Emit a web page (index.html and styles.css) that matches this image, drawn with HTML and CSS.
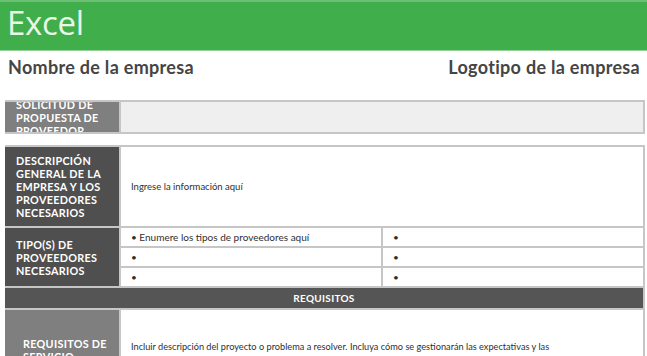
FILE: index.html
```html
<!DOCTYPE html>
<html lang="es">
<head>
<meta charset="utf-8">
<title>Solicitud de propuesta de proveedor</title>
<link rel="stylesheet" href="styles.css">
</head>
<body>
<header class="banner"><span class="app-name">Excel</span></header>
<div class="company-row">
  <h1 class="company-name">Nombre de la empresa</h1>
  <div class="company-logo">Logotipo de la empresa</div>
</div>

<section class="sheet sheet-title">
  <div class="label label-mid"><span>SOLICITUD DE PROPUESTA DE PROVEEDOR</span></div>
  <div class="value value-grey"></div>
</section>

<section class="sheet sheet-main">
  <div class="label label-dark"><span>DESCRIPCIÓN GENERAL DE LA EMPRESA Y LOS PROVEEDORES NECESARIOS</span></div>
  <div class="value value-text">Ingrese la información aquí</div>

  <div class="label label-dark label-types"><span>TIPO(S) DE PROVEEDORES NECESARIOS</span></div>
  <div class="types">
    <div class="type-cell">• Enumere los tipos de proveedores aquí</div>
    <div class="type-cell">•</div>
    <div class="type-cell">•</div>
    <div class="type-cell">•</div>
    <div class="type-cell">•</div>
    <div class="type-cell">•</div>
  </div>

  <div class="section-bar">REQUISITOS</div>

  <div class="label label-mid label-req"><span>REQUISITOS DE SERVICIO</span></div>
  <div class="value value-req">Incluir descripción del proyecto o problema a resolver. Incluya cómo se gestionarán las expectativas y las prioridades. Quién será responsable y cómo se medirá el éxito del proyecto.</div>
</section>
</body>
</html>
```

FILE: styles.css
```css
html, body {
  margin: 0;
  padding: 0;
  background: #ffffff;
  overflow: hidden;
}

body {
  width: 647px;
  height: 356px;
  font-family: "Lato", "DejaVu Sans", sans-serif;
  color: #3f3f3f;
}

.banner {
  height: 48px;
  background: #3fae4b;
  border-top: 2px solid #6cc074;
  border-bottom: 1px solid #8fd196;
  display: flex;
  align-items: center;
  padding-left: 7px;
}

.app-name {
  font-family: "Open Sans", sans-serif;
  font-weight: 400;
  font-size: 33px;
  color: #e8f7e6;
  letter-spacing: -0.3px;
  line-height: 1;
  margin-top: -8px;
}

.company-row {
  display: flex;
  justify-content: space-between;
  align-items: center;
  padding: 4px 7px 0 8px;
  height: 24px;
}

.company-name,
.company-logo {
  margin: 0;
  font-size: 18px;
  font-weight: 700;
  color: #454545;
  letter-spacing: 0.3px;
}

.sheet {
  margin-left: 5px;
  width: 638px;
  display: grid;
  grid-template-columns: 114px 1fr;
  gap: 2px;
  background: #c6c6c6;
}

.sheet-title {
  margin-top: 21px;
  padding: 2px 2px 2px 0;
  grid-template-rows: 30px;
}

.sheet-main {
  margin-top: 11px;
  padding: 2px 2px 0 0;
  grid-template-rows: 79px 58px 20px 60px;
}

.label {
  display: flex;
  align-items: center;
  overflow: hidden;
  padding: 0 6px 0 11px;
  color: #ffffff;
  font-size: 10.8px;
  font-weight: 700;
  line-height: 13px;
  letter-spacing: 0.3px;
}

.label-mid { background: #7f7f7f; }
.label-dark { background: #4f4f4f; }

.label-req {
  padding-left: 18px;
  align-items: flex-start;
  padding-top: 27px;
}

.value {
  background: #ffffff;
  font-size: 9.5px;
  color: #2f2f2f;
}

.value-grey { background: #efefef; }

.value-text {
  display: flex;
  align-items: center;
  padding-left: 10px;
}

.types {
  display: grid;
  grid-template-columns: 260px 1fr;
  grid-template-rows: repeat(3, 1fr);
  gap: 2px;
  background: #c6c6c6;
}

.type-cell {
  background: #ffffff;
  display: flex;
  align-items: center;
  padding-left: 10px;
  font-size: 10px;
  color: #2f2f2f;
}

.section-bar {
  grid-column: 1 / -1;
  background: #555555;
  color: #ffffff;
  font-size: 10px;
  font-weight: 700;
  display: flex;
  align-items: center;
  justify-content: center;
  letter-spacing: 0.3px;
}

.value-req {
  padding: 27px 70px 0 10px;
  font-size: 9.2px;
  line-height: 19px;
}
```
